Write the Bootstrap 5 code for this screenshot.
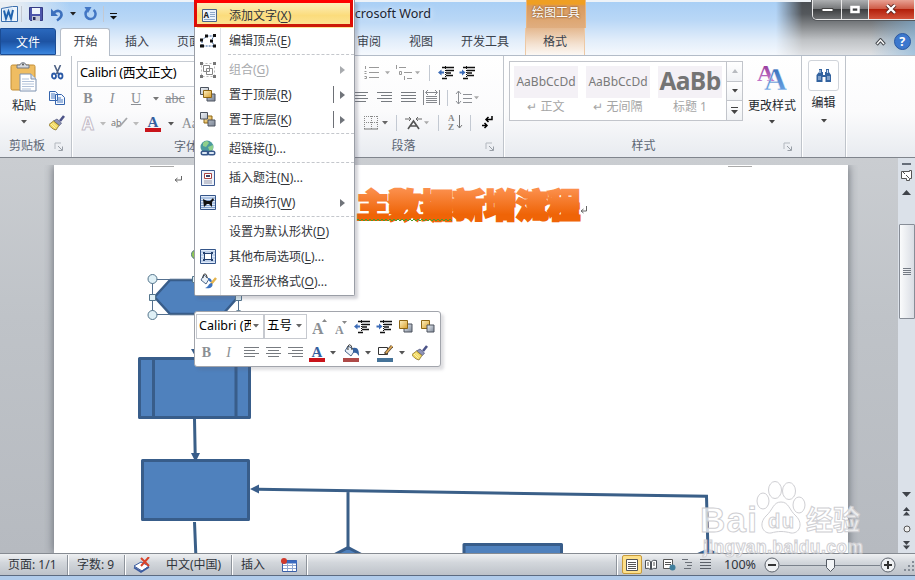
<!DOCTYPE html>
<html lang="zh-CN">
<head>
<meta charset="utf-8">
<title>Microsoft Word</title>
<link href="https://cdn.jsdelivr.net/npm/bootstrap@5.3.0/dist/css/bootstrap.min.css" rel="stylesheet">
<style>
body{width:915px;height:580px;overflow:hidden;font:12px/16px "Noto Sans","Noto Sans CJK SC",sans-serif;color:#3b3f47;background:#b0cbea}
svg{display:block;flex:none}
.strip{display:grid;align-items:center;justify-items:center}
.strip>.to-end{justify-self:end}.strip>.to-start{justify-self:start}
.tick{width:1px;height:16px;background:#c3c9d2}
.chrome-top{height:55px;background:
 linear-gradient(#eef3f8 0 2px,transparent 2px),
 radial-gradient(ellipse 70px 34px at 0 8px,#e9eef3 20%,transparent),
 linear-gradient(#a9cff5 2px,#b9d7f6 20px,#e1edfa 40px,#f4f8fd 54px);position:relative}
.smoke{position:absolute;left:776px;top:2px;width:139px;height:53px;background:linear-gradient(90deg,#7fb3dc00 95px,#7fb3dc99),linear-gradient(#4b4f54,#54585c 12px,#85888b 24px,#bfc2c5 38px,#dfe1e4);-webkit-mask-image:linear-gradient(90deg,transparent,#000 26px);mask-image:linear-gradient(90deg,transparent,#000 26px)}
.title-row{height:28px;grid-template-columns:18px 7px 22px 22px 8px 4px 18px 9px 11px 312px 95px 60px 1fr;position:relative}
.title-text{font-size:12.6px;color:#1c2430;white-space:nowrap;text-shadow:0 0 6px #fff}
.tool-cap{width:60px;height:28px;background:linear-gradient(#ef9f23 0 4px,#d99a5c 6px,#e0ae80);border:solid #e9b681;border-width:0 1px;color:#fff;text-align:center;line-height:25px;text-shadow:0 0 2px #8d5a2b,0 0 2px #8d5a2b}
.win-btns{align-self:start;justify-self:end;width:103px;height:20px;border:1px solid #e9e9e9;border-top:0;border-radius:0 0 0 5px;overflow:hidden;box-shadow:0 0 0 1px #55585c;grid-template-columns:29px 27px 1fr}
.win-btns span{display:flex;align-items:center;justify-content:center;border-right:1px solid #e8e8e8;background:linear-gradient(#aeb0b2,#77797b 45%,#3d3f41 50%,#6d6f71)}
.win-btns span:last-child{background:linear-gradient(#e8a193,#cf5d49 45%,#b3200b 50%,#d2523a);border:0}
.tab-row{height:27px;position:relative}
.tab-row .nav-link{padding:0 14px;color:#3b424d;line-height:27px;height:27px;border:0;border-radius:0;font-size:12px}
.tab-row .file-tab{width:56px;padding:0;text-align:center;color:#fff;background:linear-gradient(#2a68bd,#1d53a3 50%,#2f76cf 85%,#3e86dc);border:1px solid #1b4c94;border-radius:0 3px 0 0;margin-right:4px}
.tab-row .live-tab{background:#fff;border:1px solid #b4bdc9;border-bottom:0;border-radius:3px 3px 0 0;padding:0 0 0 1px;width:50px;text-align:center;margin:0 1px 0 0;height:28px;line-height:26px}
.tab-row .tool-tab{width:60px;padding:0;text-align:center;margin-left:2px;background:linear-gradient(#e4b88f,#f4e2d1 60%,#fcf8f4);border:solid #edc9a5;border-width:0 1px}
.ribbon{height:103px;background:linear-gradient(#fff,#fbfbfc 55%,#e8ebf0);border-top:1px solid #b3bcc8;border-bottom:1px solid #80858d}
.rgroup{border-right:1px solid #bfc4cb;box-shadow:1px 0 #fff;padding-top:4px;flex:none}
.rrow{height:25px}
.rlabel{height:20px;color:#5d6775;line-height:22px;display:grid;grid-template-columns:1fr 17px;text-align:center;align-items:center}
.g-clip{width:72px}.g-font{width:273px}.g-para{width:159px}.g-style{width:298px}.g-edit{width:44px}
.g-clip .rlabel,.g-style .rlabel{padding-right:0}
.g-style .rlabel{grid-template-columns:279px 17px}
.g-para .rlabel{grid-template-columns:117px 23px 17px}
.g-font .rlabel{grid-template-columns:102px 1fr}
.g-font .rlabel span{text-align:left;padding-left:102px;width:130px}
.clip-body{display:grid;grid-template-columns:48px 18px;height:75px}
.clip-tools{display:grid;grid-template-rows:25px 25px 25px;justify-items:center;align-items:center}
.paste{display:grid;justify-items:center;align-content:start;padding-top:2px;row-gap:6px}
.fontbox{border:1px solid #c6cbd2;background:#fff;height:26px;color:#000;font-size:12.8px;line-height:21px;padding-left:2px;margin:1px 0 0 5px;white-space:nowrap;letter-spacing:-.3px}
.f2{grid-template-columns:24px 24px 24px 16px 22px 22px}.f3{grid-template-columns:25px 9px 26px 8px 26px 8px 28px}
.serif{font-family:"Liberation Serif",serif;color:#8b8f94;font-size:14px;line-height:18px}
.p1{grid-template-columns:16px 20px 12px 20px 8px 16px 18px 24px}
.p2{grid-template-columns:5px 20px 28px 20px 26px 6px 22px 8px}
.p3{grid-template-columns:16px 20px 8px 14px 20px 7px 16px 18px 12px 22px}
.style-body{height:75px}
.gallery{width:234px;height:60px;border:1px solid #c2c5cb;background:#fff;margin:1px 0 0 5px}
.tile{width:64px;margin:4px 4px 0 4px;text-align:center;color:#a5a5a5;white-space:nowrap}
.tile b{display:block;height:32px;background:#f4f1f6;font-weight:400;color:#7a7a7a;line-height:32px;font-size:12px}
.tile .hd{font:700 24.5px/29px "Open Sans","Noto Sans",sans-serif;color:#747474;letter-spacing:-.7px}
.tile small{font-size:12px;line-height:17px;display:block}
.gal-nav{width:16px;margin-left:auto;border-left:1px solid #c2c5cb}
.gal-nav span{flex:1;border-bottom:1px solid #c2c5cb;display:flex;align-items:center;justify-content:center;background:linear-gradient(#fff,#f0f2f5)}
.gal-nav span:last-child{border:0}
.dark-label{color:#23282f;white-space:nowrap}
.bigbtn{display:grid;justify-items:center;align-content:start;row-gap:6px}
.g-edit .bigbtn{row-gap:4px}
.find{width:31px;height:31px;border:1px solid #d0d4da;border-radius:3px;background:#fff;display:grid;place-items:center}
.work{height:395px;position:relative;background:linear-gradient(#cacdd1,#bfc3c8 40%,#b6bac0)}
.page{width:794px;height:388px;margin:7px 0 0 54px;background:#fff;box-shadow:0 0 9px #62676f;clip-path:inset(0 -10px 0 -10px)}
.shapes{position:absolute;left:0;top:0}
.vbar{width:17px;margin-left:auto;background:#dbe1e9;height:395px;display:grid;justify-items:center;grid-template-rows:8px 18px 17px 23px 95px 167px 17px 17px 17px 16px;align-items:center}
.thumb{width:16px;height:95px;border:1px solid #878d97;background:linear-gradient(90deg,#fafbfc,#d9dde4);display:grid;place-items:center;border-radius:1px}
.status{height:23px;border-top:1px solid #868b92;border-bottom:1px solid #5c6b80;background:linear-gradient(#eef0f2,#d3d7dc 40%,#bdc2c9);white-space:nowrap;grid-template-columns:8px 59px 10px 47px 42px 65px 10px 30px 35px 311px 5px 20px 18px 18px 18px 18px 10px 40px 16px 100px 16px 19px;color:#30353c}
.status .tick{background:#8e949c;height:20px;box-shadow:1px 0 #fff}
.status .zoom-num{font-size:12.6px}
.on-view{width:20px;height:19px;border:1px solid #c79b3c;background:#fde08a;border-radius:2px;display:grid;place-items:center}
.ctx{position:absolute;left:194px;top:0;width:161px;height:296px;background:linear-gradient(90deg,#fff 25px,#dfe2e6 25px,#dfe2e6 26px,#fff 26px);border:1px solid #9a9ea6;border-top:0;padding:3px 0 0;border-radius:0 0 2px 2px;box-shadow:3px 3px 3px #5e5f7044;color:#33363b}
.ctx .item{height:25px;display:grid;grid-template-columns:26px 109px 7px 10px;align-items:center;justify-items:center}
.ctx .item>span{justify-self:start;padding-left:8px;white-space:nowrap}
.ctx .rule{height:4px;margin-left:33px;border-top:1px dashed #c4c7cc;transform:translateY(1px)}
.ctx .off{color:#a9abae}
.ctx .hot{margin:0 1px 0 2px;background:linear-gradient(#fdeebb,#fbdc7c 50%,#fde69b);grid-template-columns:24px 110px}
.ctx u{text-underline-offset:2px}
.callout{position:absolute;left:194px;top:0;width:159px;height:27px;border:3px solid #e10b05;border-top-color:#f00;border-bottom-color:#cc1a08}
.split{width:1px;height:17px;background:#6d7076}
.mini{position:absolute;left:194px;top:311px;width:247px;height:56px;background:#fff;border:1px solid #a2a5ac;border-radius:3px;box-shadow:3px 3px 3px #5e5f7033;padding:2px 0 0 1px}
.m1{height:25px;grid-template-columns:68px 43px 24px 20px 22px 22px 22px 22px}
.m2{height:28px;grid-template-columns:21px 23px 22px 22px 22px 22px 10px 26px 8px 26px 8px 28px}
.combo{border:1px solid #c6c9cf;width:100%;height:25px;display:flex;align-items:center;justify-content:space-between;color:#000;white-space:nowrap;padding:0 4px 2px 2px;font-size:12.5px}
.combo .face{width:52px;overflow:hidden}
.wm{position:absolute;left:690px;top:472px}
</style>
<script src="https://cdn.jsdelivr.net/npm/bootstrap@5.3.0/dist/js/bootstrap.bundle.min.js"></script>
</head>
<body>
<svg width="0" height="0" class="position-absolute">
 <defs>
 <linearGradient id="gold" x2="1" y2="1"><stop stop-color="#fff2c4"/><stop offset="1" stop-color="#d9a02c"/></linearGradient>
 <linearGradient id="steel" x2="1" y2="1"><stop stop-color="#eef2f7"/><stop offset="1" stop-color="#7d8796"/></linearGradient>
 <linearGradient id="blu" x2="0" y2="1"><stop stop-color="#2a5fae"/><stop offset="1" stop-color="#79b1ee"/></linearGradient>
 <linearGradient id="prp" x2="0" y2="1"><stop stop-color="#8a2a8f"/><stop offset="1" stop-color="#d08ad8"/></linearGradient>
 <linearGradient id="org" x2="0" y2="1"><stop offset=".2" stop-color="#fb8f4c"/><stop offset=".75" stop-color="#ef6407"/></linearGradient>
 </defs>
 <symbol id="dd" viewBox="0 0 6 4"><path d="M0 0h6L3 3.6z" fill="currentColor"/></symbol>
 <symbol id="rt" viewBox="0 0 5 8"><path d="M0 0l5 4-5 4z" fill="#70747a"/></symbol>
 <symbol id="launch" viewBox="0 0 9 9"><path d="M1 7V1h6" fill="none" stroke="#b3b8bf"/><path d="M4 4l4 4M8.500 4.500v4h-4" fill="none" stroke="#999fa7"/></symbol>
 <symbol id="lines-l" viewBox="0 0 15 12"><path d="M0 .5h15M0 3.500h11M0 6.500h15M0 9.500h11" stroke="#777b80"/></symbol>
 <symbol id="lines-c" viewBox="0 0 15 12"><path d="M0 .5h15M2 3.500h11M0 6.500h15M2 9.500h11" stroke="#777b80"/></symbol>
 <symbol id="lines-r" viewBox="0 0 15 12"><path d="M0 .5h15M4 3.500h11M0 6.500h15M4 9.500h11" stroke="#777b80"/></symbol>
 <symbol id="outd" viewBox="0 0 16 14"><path d="M4 1.500h12M8 4.500h8M8 7h5M8 9.500h7M4 12.500h5" stroke="#111" stroke-width="1.500"/><path d="M7.500 0v14" stroke="#111" stroke-dasharray="1 1"/><path d="M0 6.500l3.500-3v2H6v2H3.500v2z" fill="#3c6cb8"/></symbol>
 <symbol id="ind" viewBox="0 0 16 14"><path d="M4 1.500h12M8 4.500h8M8 7h5M8 9.500h7M4 12.500h5" stroke="#111" stroke-width="1.500"/><path d="M7.500 0v14" stroke="#111" stroke-dasharray="1 1"/><path d="M6.500 6.500L3 3.500v2H.5v2H3v2z" fill="#3c6cb8"/></symbol>
 <symbol id="brush" viewBox="0 0 16 16"><path d="M15 1l-4 5" stroke="#4c5388" stroke-width="2.600"/><path d="M8 4l4.500 4-2 2.500-6-4.500z" fill="#8d92b8" stroke="#595f80" stroke-width=".8"/><path d="M4.500 6l5.500 4.500-3 4.500C4 14.500 1 12 0 9.500z" fill="#f0d760" stroke="#8a7430" stroke-width=".8"/><path d="M2 9l4.500 4.500M3.500 8l4 4" stroke="#fff2a9"/></symbol>
 <symbol id="acol" viewBox="0 0 17 17"><text x="2.500" y="11.500" font-family="Liberation Serif,serif" font-weight="700" font-size="15" fill="#35609f">A</text><path d="M0 13h16v4H0z" fill="#c9141b"/></symbol>
 <symbol id="front" viewBox="0 0 16 15"><path d="M.5 .5h8v7h-8zM7 7h8v7H7z" fill="url(#steel)" stroke="#4c535e"/><path d="M3.500 3.500h8v7h-8z" fill="url(#gold)" stroke="#8f6613"/></symbol>
 <symbol id="back" viewBox="0 0 16 15"><path d="M4 4h8v7H4z" fill="url(#gold)" stroke="#8f6613"/><path d="M.5 .5h7v6.500h-7zM8 8h7v6H8z" fill="url(#steel)" stroke="#4c535e"/></symbol>
 <symbol id="bucket" viewBox="0 0 16 14"><path d="M5 2l7 4-4 6-6-5z" fill="#eaf1f8" stroke="#4c6689"/><path d="M5 6c-1-7 4-7 4 0" fill="none" stroke="#333"/><path d="M10 4c5-1 6 2 6 8-2-3-3-4-6-3z" fill="#35629f"/></symbol>
</svg>

<header class="chrome-top">
 <div class="smoke"></div>
 <div class="strip title-row">
  <svg class="to-end" width="17" height="17" viewBox="0 0 17 17"><path d="M.5 2.500l11-2h5v15h-16z" fill="#eef5fc" stroke="#3b6fae"/><path d="M2 3.500l10-1.500v12H2z" fill="#d6e7f7"/><path d="M3 4.500l2 8 2.500-7 2.500 7 2-8.500" fill="none" stroke="#2163ae" stroke-width="2"/></svg>
  <i class="tick"></i>
  <svg width="14" height="14" viewBox="0 0 14 14"><path d="M.5 .5h13v13h-12l-1-1z" fill="#4c55ab" stroke="#343b84"/><path d="M3 1h8v6H3z" fill="#eef4fb"/><path d="M3 9h8v5H3z" fill="#c3c9d8"/><path d="M4 10h2.500v3H4z" fill="#272c5c"/></svg>
  <svg width="14" height="15" viewBox="0 0 14 15"><path d="M3 5.500c7-5 11 3 3 8" fill="none" stroke="#3c70bd" stroke-width="2.600"/><path d="M0 1.500V9h7z" fill="#3c70bd"/></svg>
  <svg width="6" height="4" color="#222"><use href="#dd"/></svg><i></i>
  <svg width="13" height="14" viewBox="0 0 13 14"><path d="M3 3.500a5 5 0 1 0 6.500-.5" fill="none" stroke="#4276c4" stroke-width="2.500"/><path d="M4.500 0h7L8 6z" fill="#4276c4" transform="matrix(-1 0 0 1 12 0)"/></svg>
  <i class="tick"></i>
  <svg class="mt-1" width="8" height="8" viewBox="0 0 8 8"><path d="M0 1.500h7" stroke="#111"/><path d="M0 4h7L3.500 7.500z" fill="#111"/></svg>
  <span class="title-text to-end">Microsoft Word</span><i></i>
  <div class="tool-cap">绘图工具</div>
  <div class="win-btns d-grid">
   <span><svg width="13" height="6"><path d="M1 1.500h11v3H1z" fill="#fff" stroke="#444"/></svg></span>
   <span><svg width="13" height="10"><path d="M2.500 2h7v5h-7z" fill="none" stroke="#fff" stroke-width="2.500"/></svg></span>
   <span><svg width="13" height="11"><path d="M2 1l8 8M10 1L2 9" stroke="#5a2520" stroke-width="4"/><path d="M2 1l8 8M10 1L2 9" stroke="#fff" stroke-width="2.400"/></svg></span>
  </div>
 </div>
 <nav class="nav tab-row flex-nowrap align-items-start">
  <a class="nav-link file-tab">文件</a><a class="nav-link live-tab">开始</a><a class="nav-link">插入</a><a class="nav-link">页面布局</a><a class="nav-link">引用</a><a class="nav-link">邮件</a><a class="nav-link">审阅</a><a class="nav-link">视图</a><a class="nav-link">开发工具</a><a class="nav-link tool-tab">格式</a>
  <div class="ms-auto d-flex align-items-center gap-2 h-100">
   <svg width="11" height="8" viewBox="0 0 11 8"><path d="M1.500 6.500l4-4.500 4 4.500" fill="none" stroke="#45494e" stroke-width="3.400"/><path d="M2 6l3.500-4L9 6" fill="none" stroke="#fff" stroke-width="1.400"/></svg>
   <svg class="me-1" width="17" height="17" viewBox="0 0 17 17"><circle cx="8.500" cy="8.500" r="8" fill="#3c78ce" stroke="#2a58a0"/><text x="5.200" y="13" font-size="12.500" font-weight="700" fill="#fff">?</text></svg>
  </div>
 </nav>
</header>

<section class="ribbon d-flex">
 <div class="rgroup g-clip">
  <div class="clip-body">
   <div class="paste">
    <svg width="28" height="30" viewBox="0 0 28 30"><rect x="1" y="3" width="24" height="25" rx="1.500" fill="#efbd62" stroke="#c28d35"/><path d="M7 6h12V3h-3c0-3-6-3-6 0H7z" fill="#d5d9df" stroke="#707680"/><circle cx="13" cy="2.500" r="1" fill="#555"/><path d="M10 12h11l5 5v12H10z" fill="#fff" stroke="#7d91b0"/><path d="M21 12v5h5" fill="#dfe7f2" stroke="#7d91b0"/><path d="M12 17h7M12 19.500h12M12 22h12M12 24.500h12M12 27h9" stroke="#9fb3cf" stroke-width=".8"/></svg>
    <span class="dark-label">粘贴</span>
    <svg width="6" height="4" color="#555"><use href="#dd"/></svg>
   </div>
   <div class="clip-tools">
    <svg width="13" height="15" viewBox="0 0 13 15"><path d="M3.500 0l4 9M9.500 0l-4 9" stroke="#4d6184" stroke-width="1.600"/><ellipse cx="3" cy="11" rx="2" ry="2.500" fill="none" stroke="#2a59a6" stroke-width="1.800"/><ellipse cx="9.500" cy="11" rx="2" ry="2.500" fill="none" stroke="#2a59a6" stroke-width="1.800"/></svg>
    <svg width="16" height="14" viewBox="0 0 16 14"><path d="M.5 .5h6l2 2v7h-8zM6.500 3.500h6l3 3v7h-9z" fill="#f4f8fe" stroke="#3564ad"/><path d="M2 3h4M2 5h4M2 7h4M8 7h4M8 9h6M8 11h6" stroke="#4b7bc1"/></svg>
    <svg width="16" height="16"><use href="#brush"/></svg>
   </div>
  </div>
  <div class="rlabel"><span>剪贴板</span><svg width="9" height="9"><use href="#launch"/></svg></div>
 </div>
 <div class="rgroup g-font">
  <div class="rrow"><div class="fontbox">Calibri (西文正文)</div></div>
  <div class="strip rrow f2 ps-1">
   <b class="serif">B</b><i class="serif">I</i><u class="serif">U</u><svg width="6" height="4" color="#777"><use href="#dd"/></svg><s class="serif" id="strike">abc</s><b class="serif">×</b>
  </div>
  <div class="strip rrow f3">
   <svg class="to-end" width="16" height="18"><text x="1" y="15" font-size="17" font-weight="700" fill="#fff" stroke="#c4bcc8">A</text></svg>
   <svg class="to-end" width="6" height="4" color="#bbb"><use href="#dd"/></svg>
   <svg width="17" height="14"><text x="0" y="9" font-size="9" fill="#777">ab</text><path d="M16 1L9 9l-4 1" fill="none" stroke="#a5a7aa" stroke-width="1.800"/></svg>
   <svg width="6" height="4" color="#bbb"><use href="#dd"/></svg>
   <svg class="to-end me-1" width="17" height="17"><use href="#acol"/></svg>
   <svg class="to-end" width="6" height="4" color="#555"><use href="#dd"/></svg><span class="serif to-end pe-1">Aa</span>
  </div>
  <div class="rlabel"><span>字体</span></div>
 </div>
 <div class="rgroup g-para">
  <div class="strip rrow p1">
   <i></i><svg width="15" height="15" viewBox="0 0 15 15"><path d="M5 2.500h10M5 7.500h10M5 12.500h10M1.500 1v3M.5 6.500h2M.5 8.500h2M.5 11.500h2v2h-2" fill="none" stroke="#999"/></svg><svg width="5" height="4" color="#aaa"><use href="#dd"/></svg>
   <svg class="to-end" width="18" height="16" viewBox="0 0 18 16"><path d="M4 2.500h7M9 7.500h8M12 13.500h5M1.500 0v4M4.500 6.500h2v3h-2zM9.500 11v4" fill="none" stroke="#999"/></svg><svg width="5" height="4" color="#aaa"><use href="#dd"/></svg>
   <i class="tick"></i><svg width="16" height="14"><use href="#outd"/></svg><svg width="16" height="14"><use href="#ind"/></svg>
  </div>
  <div class="strip rrow p2">
   <i></i><svg width="15" height="12"><use href="#lines-c"/></svg><svg width="15" height="12"><use href="#lines-r"/></svg>
   <svg width="15" height="12"><path d="M0 .5h15M0 3.500h15M0 6.500h15M0 9.500h15" stroke="#777b80"/></svg>
   <svg width="17" height="15"><path d="M.5 0v15M16.500 0v15M3 6.500h11M3 8.500h11M3 10.500h11M3 12.500h11M3 2.500h11M5 0L2.500 2.500 5 5M12 0l2.500 2.500L12 5" fill="none" stroke="#85888d"/></svg>
   <i class="tick"></i><svg class="to-end" width="17" height="16"><path d="M3.500 1v13M1 4l2.500-3L6 4M1 11l2.500 3L6 11M8 4.500h9M8 8.500h9M8 12.500h9" fill="none" stroke="#8d9095"/></svg><svg width="5" height="4" color="#aaa"><use href="#dd"/></svg>
  </div>
  <div class="strip rrow p3">
   <i></i><svg width="14" height="14"><path d="M0 .5h14M0 6.500h14M.5 0v13M7.500 0v13M13.500 0v13" stroke="#888" stroke-dasharray="1 1"/><path d="M0 13h14" stroke="#777"/></svg><svg width="6" height="4" color="#666"><use href="#dd"/></svg><i class="tick"></i>
   <svg width="17" height="14"><path d="M3 13l5.500-8 5.500 8M5 10h7" fill="none" stroke="#555" stroke-width="1.600"/><path d="M0 3h6M4 1l2 2-2 2M17 3h-6M13 1l-2 2 2 2" fill="none" stroke="#666"/></svg><svg width="5" height="4" color="#aaa"><use href="#dd"/></svg><i class="tick"></i>
   <svg width="15" height="17"><g font-size="9" font-family="Liberation Serif,serif" font-weight="700" fill="#888"><text y="7">A</text><text y="16">Z</text></g><path d="M11.500 1v13M9 11l2.500 3 2.500-3" fill="none" stroke="#777"/></svg><i class="tick"></i>
   <svg width="12" height="14"><path d="M11 0v3.500H5M7.500 1L5 3.500 7.500 6M1 9.500h5M3.500 7L6 9.500 3.500 12" fill="none" stroke="#000" stroke-width="1.500"/></svg>
  </div>
  <div class="rlabel"><span>段落</span><i></i><svg width="9" height="9"><use href="#launch"/></svg></div>
 </div>
 <div class="rgroup g-style">
  <div class="d-flex style-body">
   <div class="gallery d-flex">
    <div class="tile"><b>AaBbCcDd</b><small>↵ 正文</small></div>
    <div class="tile"><b>AaBbCcDd</b><small>↵ 无间隔</small></div>
    <div class="tile"><b class="hd">AaBb</b><small>标题 1</small></div>
    <div class="gal-nav d-flex flex-column"><span><svg width="6" height="4" viewBox="0 0 6 4"><path d="M0 4h6L3 0z" fill="#b8bbc0"/></svg></span><span><svg width="6" height="4" color="#444"><use href="#dd"/></svg></span><span><svg width="7" height="8" viewBox="0 0 7 8"><path d="M0 .5h7" stroke="#444"/><path d="M0 3h7L3.500 7z" fill="#444"/></svg></span></div>
   </div>
   <div class="bigbtn flex-fill pt-1">
    <svg width="30" height="28" viewBox="0 0 30 28"><text x="0" y="17" font-family="Liberation Serif,serif" font-weight="700" font-size="24" fill="url(#prp)">A</text><text x="7" y="26" font-family="Liberation Serif,serif" font-weight="700" font-size="32" fill="url(#blu)" stroke="#fff" stroke-width=".4">A</text></svg>
    <span class="dark-label">更改样式</span>
    <svg width="6" height="4" color="#444"><use href="#dd"/></svg>
   </div>
  </div>
  <div class="rlabel"><span>样式</span><svg width="9" height="9"><use href="#launch"/></svg></div>
 </div>
 <div class="rgroup g-edit">
  <div class="bigbtn">
   <div class="find"><svg width="16" height="14" viewBox="0 0 16 14"><path d="M3 0h3v3h1v3h2V3h1V0h3v3l2 3v7H9.500V8h-3v5H.5V6L3 3z" fill="#33639f"/><path d="M2 8h3M2 10h3M11 8h3M11 10h3M4 1v3M11.500 1v3" stroke="#c9dcf2" stroke-width="1.200"/></svg></div>
   <span class="dark-label">编辑</span>
   <svg class="mt-1" width="6" height="4" color="#444"><use href="#dd"/></svg>
  </div>
 </div>
</section>

<main class="work d-flex">
 <div class="page"></div>
 <svg class="shapes" width="898" height="395" viewBox="0 158 898 395">
  <path d="M150 166.500h24M728 166.500h24" stroke="#aaa"/>
  <g fill="none" stroke="#666"><path d="M181.500 176v4h-6M177.500 178l-2.500 2 2.500 2"/><path d="M586.500 206v5h-5M583.500 209l-2.500 2 2.500 2"/></g>
  <text x="357" y="217" font-family="Noto Sans CJK SC,sans-serif" font-weight="900" font-size="32" textLength="223" fill="url(#org)" stroke="url(#org)" stroke-width="3" stroke-linejoin="miter">主数据新增流程</text>
  <path d="M357 219.500h95" stroke="#4c9a2c" stroke-dasharray="2 2"/><path d="M359 220.500h93" stroke="#4c9a2c" stroke-dasharray="2 2"/>
  <g fill="#4f81bd" stroke="#385d8a" stroke-width="3" stroke-linejoin="round">
   <path d="M154.500 297L170 280h53l15 17-15 17h-53z" stroke-width="2.500"/>
   <path d="M139.500 358.500h110v59h-110zM142.500 460.500h106v59h-106z"/>
   <path d="M153.500 358v60M236 358v60"/>
   <path d="M464 560v-15.500h97.500V560zM330 557l18-9.500 18 9.500zM692 557l16-7 16 7z"/>
  </g>
  <g fill="none" stroke="#3a5f88" stroke-width="3"><path d="M194.500 419l.7 36M194.500 522l1.300 32M348 491v56M258 489.300l448.500 7 1.500 55"/></g>
  <path d="M191 453h9l-4.500 9zM250 489l9-4.500v9zM191 349h8l-4 7z" fill="#385d8a"/>
  <path d="M152.500 279.500h86v35h-86z" fill="none" stroke="#54708f"/>
  <g fill="#dff0f6" stroke="#54758c"><circle cx="152.500" cy="279" r="4.500"/><circle cx="152.500" cy="315" r="4.500"/><circle cx="238.500" cy="315" r="4.500"/><path d="M149.500 294.500h6v6h-6zM235.500 294.500h6v6h-6zM192.500 276.500h6v6h-6z"/><circle cx="196" cy="254.500" r="4.500" fill="#92c954"/></g>
 </svg>
 <div class="vbar">
  <svg width="9" height="3" class="mt-1"><path d="M0 1h9" stroke="#666e79" stroke-width="2"/></svg>
  <svg width="13" height="13"><path d="M1.500 2.500h8v-1h2v8h-2v2h-3v-2h-5z" fill="#fff" stroke="#555"/><path d="M3 3l2 2M6 6l3 3" stroke="#555"/></svg>
  <svg width="9" height="5"><path d="M0 5h9L4.500 0z" fill="#3f434a"/></svg><i></i>
  <div class="thumb"><svg width="8" height="8"><path d="M0 .5h8M0 2.500h8M0 4.500h8M0 6.500h8" stroke="#747a84"/></svg></div><i></i>
  <svg width="9" height="5"><path d="M0 0h9L4.500 5z" fill="#3f434a"/></svg>
  <svg width="7" height="9"><path d="M0 4h7L3.500 0zM0 8.500h7L3.500 4.500z" fill="#3f434a"/></svg>
  <svg width="8" height="8"><circle cx="4" cy="4" r="3" fill="#eee" stroke="#555"/></svg>
  <svg width="7" height="9"><path d="M0 0h7L3.500 4zM0 4.500h7L3.500 8.500z" fill="#3f434a"/></svg>
 </div>
</main>

<footer class="strip status">
 <i></i><span class="to-start">页面: 1/1</span><i class="tick to-start"></i><span class="to-start">字数: 9</span>
 <span class="d-flex align-items-center gap-2 to-start"><i class="tick"></i><svg width="18" height="16" viewBox="0 0 18 16"><path d="M1 9l7-4 8 4-7 5z" fill="#fff" stroke="#3c5c9f"/><path d="M1 10.500l7 4.500 8-5" fill="none" stroke="#3c5c9f" stroke-width="1.500"/><path d="M8 1l8 8M16 0L8 9" stroke="#d8432a" stroke-width="2"/></svg></span>
 <span class="to-start">中文(中国)</span><i class="tick to-start"></i><span class="to-start">插入</span>
 <svg width="16" height="14"><path d="M1.500 2.500h14v11h-14z" fill="#fff" stroke="#3a5fa6"/><path d="M2 4h14" stroke="#3a6bc0" stroke-width="3"/><path d="M2 7.500h13M2 10.500h13M6.500 5v8M11.500 5v8" stroke="#91a9d2"/><circle cx="3" cy="3" r="3" fill="#d0392b"/></svg>
 <span class="d-flex w-100 justify-content-between"><i class="tick"></i><i class="tick"></i></span><i></i>
 <span class="on-view"><svg width="12" height="12"><path d="M.5 .5h11v11H.5z" fill="#fff" stroke="#555"/><path d="M2 3.500h8M2 5.500h8M2 7.500h8M2 9.500h8" stroke="#555"/></svg></span>
 <svg width="12" height="12"><path d="M.5 1.500q3-1 5 1v8q-2-2-5-1zM11.500 1.500q-3-1-5 1v8q2-2 5-1z" fill="#fff" stroke="#4b5057"/><path d="M2 4h2M2 6h2M8 4h2M8 6h2" stroke="#555"/></svg>
 <svg width="13" height="12"><path d="M.5 .5h9v9h-9z" fill="#fff" stroke="#555"/><path d="M2 3.500h6M2 5.500h6" stroke="#555"/><circle cx="9.500" cy="8.500" r="3" fill="#3f7e9d"/></svg>
 <svg width="10" height="11"><path d="M0 .5h6M3 3.500h7M5 6.500h5M2 9.500h7" stroke="#6b7078"/></svg>
 <svg width="11" height="11"><path d="M0 .5h11M0 3.500h11M0 6.500h11M0 9.500h11" stroke="#5b6068"/></svg><i></i>
 <span class="to-start zoom-num">100%</span>
 <svg width="16" height="16"><circle cx="8" cy="8" r="7" fill="#eff1f3" stroke="#5e646d"/><path d="M4 8h8" stroke="#333" stroke-width="2"/></svg>
 <svg width="100" height="16"><path d="M0 8.500h100" stroke="#7b828c"/><path d="M46.500 2.500h8v8l-4 4-4-4z" fill="#f3f5f7" stroke="#555b64"/></svg>
 <svg width="16" height="16"><circle cx="8" cy="8" r="7" fill="#eff1f3" stroke="#5e646d"/><path d="M4 8h8M8 4v8" stroke="#333" stroke-width="2"/></svg>
 <svg class="to-end" width="11" height="16"><path d="M8 5h2M4 9h2M8 9h2M0 13h2M4 13h2M8 13h2" stroke="#858c96" stroke-width="2"/></svg>
</footer>

<div class="ctx">
 <div class="item hot"><svg width="15" height="13"><path d="M.5 .5h14v12H.5z" fill="#eaf2fc" stroke="#4a6489"/><text x="1.500" y="8.500" font-size="8" font-weight="700" fill="#222">A</text><path d="M8 3.500h5M8 5.500h5M8 7.500h5M2 10.500h11" stroke="#8fa9c9"/></svg><span>添加文字(<u>X</u>)</span></div>
 <div class="item"><svg width="17" height="14"><path d="M2 12V6l5-4h7l-3 5 4 5z" fill="none" stroke="#345f9c" stroke-dasharray="2 1"/><path d="M0 10.500h4v3H0zM0 4.500h3v3H0zM5 .5h3v3H5zM13 0h3v3h-3zM10 5.500h3v3h-3zM13 10.500h3v3h-3z" fill="#111"/></svg><span>编辑顶点(<u>E</u>)</span></div>
 <div class="rule"></div>
 <div class="item off"><svg width="16" height="16"><path d="M1.500 1.500h13v13h-13z" fill="none" stroke="#bbb" stroke-dasharray="2 2"/><path d="M3.500 3.500h6v6h-6zM6.500 6.500h6v6h-6z" fill="none" stroke="#888"/><path d="M0 0h3v3H0zM13 0h3v3h-3zM0 13h3v3H0zM13 13h3v3h-3z" fill="#777"/></svg><span>组合(<u>G</u>)</span><i></i><svg width="5" height="8" opacity=".6"><use href="#rt"/></svg></div>
 <div class="item"><svg width="16" height="15"><use href="#front"/></svg><span>置于顶层(<u>R</u>)</span><i class="split justify-self-start"></i><svg width="5" height="8"><use href="#rt"/></svg></div>
 <div class="item"><svg width="16" height="15"><use href="#back"/></svg><span>置于底层(<u>K</u>)</span><i class="split"></i><svg width="5" height="8"><use href="#rt"/></svg></div>
 <div class="rule"></div>
 <div class="item"><svg width="16" height="17"><circle cx="7" cy="7" r="6.500" fill="#4b9a9d"/><path d="M3 3q4-4 6 0l-3 4-3-1zM8 7l5-2v4l-3 3z" fill="#8fd08b"/><path d="M3 13h4M10 13h3" stroke="#37578a" stroke-width="5" stroke-linecap="round"/><path d="M3 13h3M10 13h3" stroke="#dce8f4" stroke-width="2.200" stroke-linecap="round"/></svg><span>超链接(<u>I</u>)...</span></div>
 <div class="rule"></div>
 <div class="item"><svg width="14" height="16"><path d="M.5 .5h13v15H.5z" fill="#eef3fa" stroke="#3e5b93"/><path d="M3.500 3.500h7v5h-7z" fill="#fff" stroke="#a44"/><path d="M5 6h4" stroke="#446" stroke-width="2"/><path d="M3 11h8M3 13h8" stroke="#99a"/></svg><span>插入题注(<u>N</u>)...</span></div>
 <div class="item"><svg width="16" height="15"><path d="M.5 .5h15v14H.5z" fill="#dfeafa" stroke="#345589"/><path d="M1 3h14M1 5.500h14M1 8h14M1 10.500h14M1 12.500h14" stroke="#7f9fcb"/><path d="M3 4l4 2h3l3-3 1 2-2 2v5l-3-3H7l-3 3z" fill="#111"/></svg><span>自动换行(<u>W</u>)</span><i></i><svg width="5" height="8"><use href="#rt"/></svg></div>
 <div class="rule"></div>
 <div class="item"><i></i><span>设置为默认形状(<u>D</u>)</span></div>
 <div class="item"><svg width="16" height="15"><path d="M.5 .5h15v14H.5z" fill="#dfeafa" stroke="#345589"/><path d="M1 3h14M1 6h14M1 9h14M1 12h14" stroke="#9db6d8"/><path d="M4.500 4.500h7v6h-7z" fill="#fff" stroke="#24406e"/><path d="M3 3h2v2H3zM11 3h2v2h-2zM3 10h2v2H3zM11 10h2v2h-2z" fill="#24406e"/></svg><span>其他布局选项(<u>L</u>)...</span></div>
 <div class="item"><svg width="17" height="17" viewBox="0 0 17 17"><path d="M4 2l5 4-3 5-5-4z" fill="#eaf1f8" stroke="#4c6689"/><path d="M3 5c0-6 4-5 4 0" fill="none" stroke="#333"/><path d="M8 5q4 0 4 5l-3-2z" fill="#3a72bf"/><path d="M16 5l-5 6" stroke="#e4b34c" stroke-width="2.500"/><path d="M12 10c2 4-2 6-7 5 4-1 3-5 7-5z" fill="#3c73c0"/></svg><span>设置形状格式(<u>O</u>)...</span></div>
</div>
<div class="callout"></div>

<div class="mini">
 <div class="strip m1">
  <div class="combo"><span class="face">Calibri (西</span><svg width="6" height="4" color="#666"><use href="#dd"/></svg></div>
  <div class="combo">五号<svg width="6" height="4" color="#666"><use href="#dd"/></svg></div>
  <svg width="15" height="16"><text y="15" font-family="Liberation Serif,serif" font-weight="700" font-size="16" fill="#8b8f94">A</text><path d="M10 3h5l-2.500-3z" fill="#888"/></svg>
  <svg width="12" height="14"><text y="14" font-family="Liberation Serif,serif" font-weight="700" font-size="12" fill="#8b8f94">A</text><path d="M7 1h5L9.500 4z" fill="#888"/></svg>
  <svg width="16" height="14"><use href="#outd"/></svg><svg width="16" height="14"><use href="#ind"/></svg>
  <svg width="14" height="13" viewBox="0 0 14 13"><path d="M5 4h8v8H5z" fill="url(#steel)" stroke="#4c535e"/><path d="M.5 .5h8v8h-8z" fill="url(#gold)" stroke="#8f6613"/></svg>
  <svg width="14" height="13" viewBox="0 0 14 13"><path d="M.5 .5h8v8h-8z" fill="url(#gold)" stroke="#8f6613"/><path d="M6 5h7v7H6z" fill="url(#steel)" stroke="#4c535e"/></svg>
 </div>
 <div class="strip m2">
  <b class="serif">B</b><i class="serif">I</i><svg width="15" height="12"><use href="#lines-l"/></svg><svg width="15" height="12"><use href="#lines-c"/></svg><svg width="15" height="12"><use href="#lines-r"/></svg>
  <svg width="17" height="17"><use href="#acol"/></svg><svg width="6" height="4" color="#555"><use href="#dd"/></svg>
  <svg width="16" height="18"><use href="#bucket" width="16" height="14"/><path d="M0 14h16v4H0z" fill="#ae4a48"/></svg><svg width="6" height="4" color="#555"><use href="#dd"/></svg>
  <svg width="16" height="18"><path d="M1.500 3.500h9v7h-9z" fill="#fff" stroke="#333"/><path d="M15 2L8 10" stroke="#5d4c38" stroke-width="3"/><path d="M15 2L9 9" stroke="#e2ab55" stroke-width="1.600"/><path d="M0 14h16v4H0z" fill="#457399"/></svg><svg width="6" height="4" color="#555"><use href="#dd"/></svg>
  <svg width="16" height="16"><use href="#brush"/></svg>
 </div>
</div>

<svg class="wm" width="180" height="86" viewBox="690 472 180 86">
 <g fill="#fff" fill-opacity=".75" stroke="#cfcfd3" stroke-width="1">
  <ellipse cx="763" cy="501" rx="6" ry="8"/><ellipse cx="775" cy="490" rx="6.500" ry="8.500"/><ellipse cx="789" cy="491" rx="6.500" ry="8.500"/><ellipse cx="799" cy="505" rx="6" ry="8"/>
  <path d="M781 502c8 0 8 8 15 14 8 8 3 18-5 17-7-2-13-2-20 0-8 1-13-9-5-17 7-6 7-14 15-14z"/>
  <g font-family="Liberation Sans,sans-serif" font-weight="700"><text x="700" y="532" font-size="35" textLength="57">Bai</text><text x="768" y="528" font-size="20" textLength="26">du</text><text x="806" y="530" font-family="Noto Sans CJK SC,sans-serif" font-size="27" textLength="54">经验</text><text x="703" y="553" font-size="17.500" textLength="160">jingyan.baidu.com</text></g>
 </g>
</svg>
</body>
</html>
